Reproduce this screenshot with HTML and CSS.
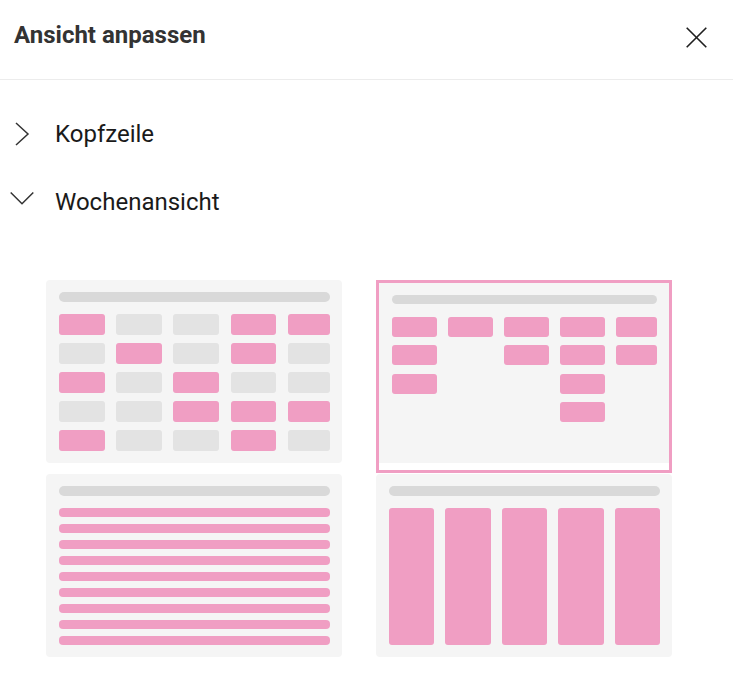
FILE: index.html
```html
<!DOCTYPE html>
<html lang="de">
<head>
<meta charset="utf-8">
<title>Ansicht anpassen</title>
<link rel="stylesheet" href="styles.css">
</head>
<body>
<div class="panel">
  <header class="header">
    <h1 class="title">Ansicht anpassen</h1>
    <button class="close" aria-label="Schließen">
      <svg width="21" height="21" viewBox="0 0 21 21"><path d="M0.7 0.7 L20.3 20.3 M20.3 0.7 L0.7 20.3" stroke="#1f1f1f" stroke-width="1.6" fill="none"/></svg>
    </button>
  </header>
  <section class="sections">
    <div class="row">
      <span class="chev">
        <svg width="24" height="24" viewBox="0 0 24 24"><polyline points="6,1 18,12 6,23" fill="none" stroke="#333" stroke-width="1.5"/></svg>
      </span>
      <span class="label">Kopfzeile</span>
    </div>
    <div class="row">
      <span class="chev">
        <svg width="24" height="24" viewBox="0 0 24 24"><polyline points="0.7,2.5 12,13.8 23.3,2.5" fill="none" stroke="#333" stroke-width="1.5"/></svg>
      </span>
      <span class="label">Wochenansicht</span>
    </div>
  </section>
  <div class="tiles">
    <div class="card">
      <div class="bar"></div>
      <div class="cells">
        <span class="p"></span><span class="g"></span><span class="g"></span><span class="p"></span><span class="p"></span>
        <span class="g"></span><span class="p"></span><span class="g"></span><span class="p"></span><span class="g"></span>
        <span class="p"></span><span class="g"></span><span class="p"></span><span class="g"></span><span class="g"></span>
        <span class="g"></span><span class="g"></span><span class="p"></span><span class="p"></span><span class="p"></span>
        <span class="p"></span><span class="g"></span><span class="g"></span><span class="p"></span><span class="g"></span>
      </div>
    </div>
    <div class="selected">
      <div class="card card-sel">
        <div class="bar bar-sel"></div>
        <div class="cells cells-sel">
          <span class="p"></span><span class="p"></span><span class="p"></span><span class="p"></span><span class="p"></span>
          <span class="p"></span><span class="e"></span><span class="p"></span><span class="p"></span><span class="p"></span>
          <span class="p"></span><span class="e"></span><span class="e"></span><span class="p"></span><span class="e"></span>
          <span class="e"></span><span class="e"></span><span class="e"></span><span class="p"></span><span class="e"></span>
        </div>
      </div>
    </div>
    <div class="card">
      <div class="bar"></div>
      <div class="lines">
        <span></span><span></span><span></span><span></span><span></span><span></span><span></span><span></span><span></span>
      </div>
    </div>
    <div class="card">
      <div class="bar"></div>
      <div class="cols">
        <span></span><span></span><span></span><span></span><span></span>
      </div>
    </div>
  </div>
</div>
</body>
</html>
```
FILE: styles.css
```css
* { box-sizing: border-box; }
html, body { margin: 0; padding: 0; background: #fff; }
body { font-family: Roboto, "Liberation Sans", Arial, sans-serif; color: #1c1c1c; }

.panel { width: 733px; height: 681px; overflow: hidden; }

.header {
  height: 80px;
  border-bottom: 1px solid #ececec;
  display: flex;
  justify-content: space-between;
  align-items: flex-start;
  padding: 21px 26px 0 14px;
}
.title {
  margin: 0;
  font-size: 24px;
  line-height: 28px;
  font-weight: 700;
  color: #333;
}
.close {
  margin-top: 6px;
  width: 21px;
  height: 21px;
  padding: 0;
  border: 0;
  background: none;
  display: block;
}
.close svg { display: block; }

.sections { padding-top: 20px; }
.row {
  height: 68px;
  display: flex;
  align-items: center;
  padding-left: 10px;
}
.chev { width: 24px; height: 24px; margin-right: 21px; }
.chev svg { display: block; }
.label { font-size: 24px; line-height: 28px; color: #1a1a1a; }

.tiles {
  margin-top: 44px;
  margin-left: 46px;
  display: grid;
  grid-template-columns: 296px 296px;
  column-gap: 34px;
  row-gap: 11px;
  align-items: start;
}

.card {
  background: #f5f5f5;
  border-radius: 4px;
  height: 183px;
  padding: 12px 12px 12px 13px;
}
.bar {
  height: 10px;
  border-radius: 5px;
  background: #d9d9d9;
  margin-bottom: 12px;
}

.cells {
  display: grid;
  grid-template-columns: 1fr 1fr 1fr 1fr 0.92fr;
  grid-auto-rows: 21px;
  column-gap: 11.4px;
  row-gap: 8px;
}
.cells span { border-radius: 3px; }
.cells .p { background: #f09ec3; }
.cells .g { background: #e3e3e3; }
.cells .e { background: transparent; }

.selected {
  border: 3px solid #f09ec3;
  background: #fff;
  height: 193px;
  margin-bottom: -10px;
  padding-bottom: 7px;
}
.card-sel {
  height: 180px;
  border-radius: 0;
  padding: 12px 12px 12px 13px;
}
.bar-sel { height: 9px; margin-bottom: 13px; }
.cells-sel {
  grid-auto-rows: 20px;
  column-gap: 11.2px;
  row-gap: 8.3px;
}

.lines {
  display: flex;
  flex-direction: column;
  gap: 7px;
}
.lines span {
  height: 9px;
  border-radius: 4px;
  background: #f09ec3;
}

.cols {
  display: grid;
  grid-template-columns: repeat(5, 1fr);
  column-gap: 11px;
  height: 137px;
}
.cols span {
  border-radius: 3px;
  background: #f09ec3;
}
```
